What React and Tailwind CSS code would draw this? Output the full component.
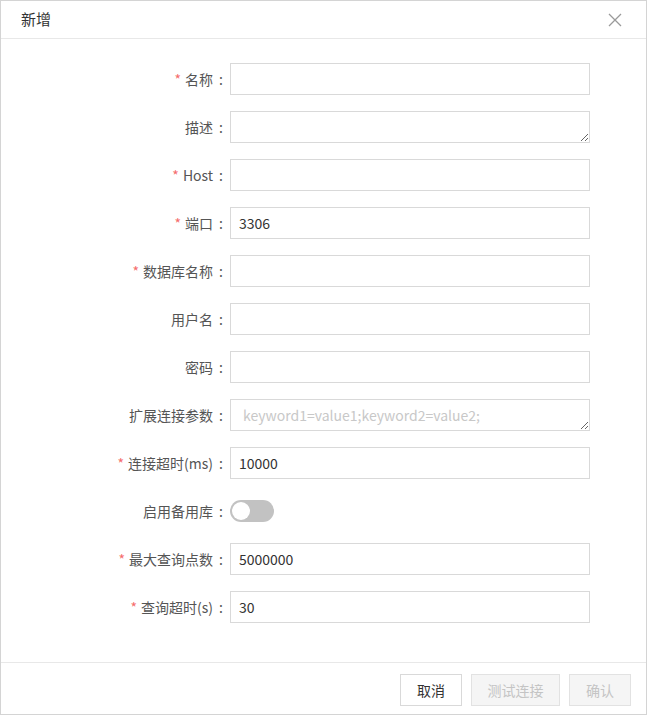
import React from "react";

const FONT = { fontFamily: '"Noto Sans CJK SC", "Noto Sans", sans-serif' };

function Label({ text, required }) {
  return (
    <div className="w-[229px] shrink-0 flex items-center justify-end pr-[7px] text-[14px] text-[#555]">
      {required && <span className="text-[#f56c6c] mr-[4px] text-[14px]">*</span>}
      <span>{text}</span>
      <span className="ml-[6px]">:</span>
    </div>
  );
}

function Row({ label, required, children }) {
  return (
    <div className="flex items-center h-8">
      <Label text={label} required={required} />
      {children}
    </div>
  );
}

function Input({ value }) {
  return (
    <input
      readOnly
      defaultValue={value}
      className="w-[360px] h-8 border border-[#d9d9d9] px-[8px] text-[14px] text-[#333] outline-none bg-white"
      style={FONT}
    />
  );
}

function TextArea({ placeholder }) {
  return (
    <textarea
      readOnly
      placeholder={placeholder}
      className="w-[360px] h-8 border border-[#d9d9d9] px-[12px] py-[5px] text-[14px] leading-[20px] text-[#333] outline-none bg-white placeholder:text-[#c8c8c8] overflow-hidden"
      style={FONT}
    />
  );
}

export default function App() {
  return (
    <div className="w-[647px] h-[715px] border border-[#d4d4d4] bg-white flex flex-col" style={FONT}>
      <div className="h-[38px] border-b border-[#e8e8e8] flex items-center justify-between pl-[20px] pr-[24px] shrink-0">
        <span className="text-[15px] text-[#333]">新增</span>
        <svg width="14" height="14" viewBox="0 0 14 14" className="mt-[1px]">
          <path d="M1 1 L13 13 M13 1 L1 13" stroke="#9a9a9a" strokeWidth="1.3" fill="none" />
        </svg>
      </div>
      <div className="flex-1 flex flex-col gap-4 pt-6">
        <Row label="名称" required><Input value="" /></Row>
        <Row label="描述"><TextArea placeholder="" /></Row>
        <Row label="Host" required><Input value="" /></Row>
        <Row label="端口" required><Input value="3306" /></Row>
        <Row label="数据库名称" required><Input value="" /></Row>
        <Row label="用户名"><Input value="" /></Row>
        <Row label="密码"><Input value="" /></Row>
        <Row label="扩展连接参数"><TextArea placeholder="keyword1=value1;keyword2=value2;" /></Row>
        <Row label="连接超时(ms)" required><Input value="10000" /></Row>
        <Row label="启用备用库">
          <div className="w-[44px] h-[22px] rounded-full bg-[#c2c2c2] flex items-center px-[2px]">
            <div className="w-[18px] h-[18px] rounded-full bg-white" />
          </div>
        </Row>
        <Row label="最大查询点数" required><Input value="5000000" /></Row>
        <Row label="查询超时(s)" required><Input value="30" /></Row>
      </div>
      <div className="h-[52px] border-t border-[#e8e8e8] flex justify-end items-start pt-[11px] pr-[15px] gap-[9px] shrink-0">
        <button className="w-[62px] h-8 border border-[#d9d9d9] bg-white text-[14px] text-[#333]" style={FONT}>取消</button>
        <button className="w-[89px] h-8 border border-[#e2e2e2] bg-[#f5f5f5] text-[14px] text-[#c4c4c4]" style={FONT}>测试连接</button>
        <button className="w-[62px] h-8 border border-[#e2e2e2] bg-[#f5f5f5] text-[14px] text-[#c4c4c4]" style={FONT}>确认</button>
      </div>
    </div>
  );
}
